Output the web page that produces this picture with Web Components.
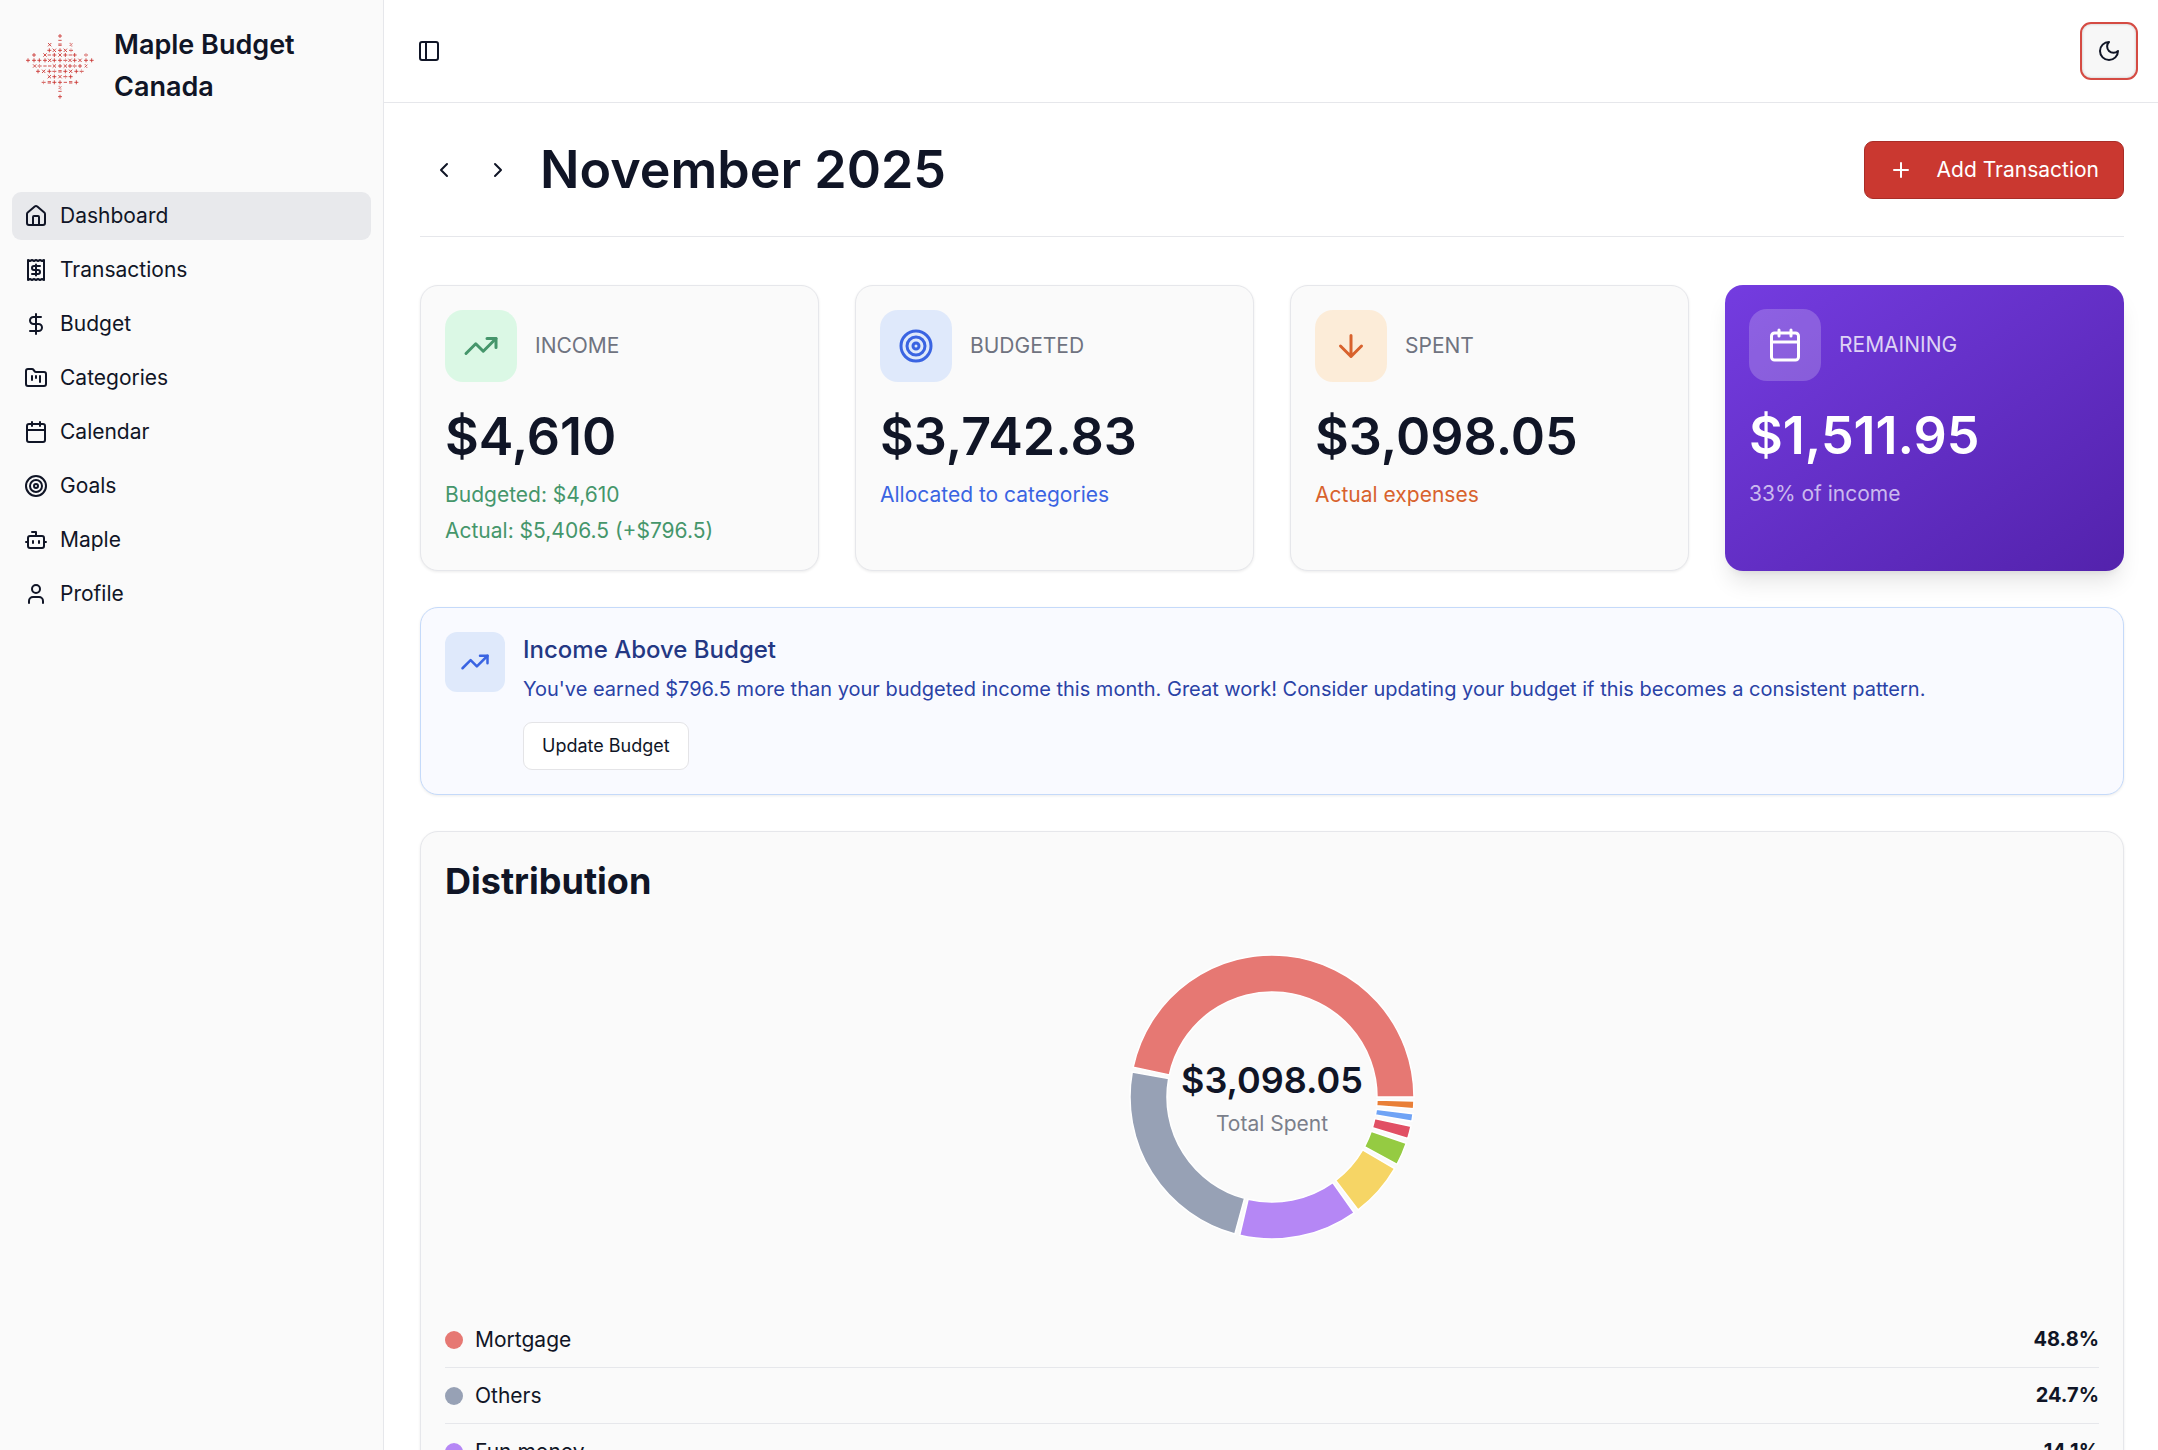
<!DOCTYPE html>
<html lang="en">
<head>
<meta charset="utf-8">
<meta name="viewport" content="width=device-width, initial-scale=1">
<title>Maple Budget Canada</title>
<style>
    :root {
        --ink: #101526;
        --muted: #6f7380;
        --line: #e6e7eb;
        --panel: #fafafa;
        --brand: #ca3830;
    }

    body {
        margin: 0;
        background: #fff;
        color: var(--ink);
        font: 400 21px/30px Inter, "Open Sans", sans-serif;
    }
</style>
</head>
<body>
<budget-app></budget-app>

<script>
const ICONS = {
    house: '<path d="M15 21v-8a1 1 0 0 0-1-1h-4a1 1 0 0 0-1 1v8"/><path d="M3 10a2 2 0 0 1 .709-1.528l7-5.999a2 2 0 0 1 2.582 0l7 5.999A2 2 0 0 1 21 10v9a2 2 0 0 1-2 2H5a2 2 0 0 1-2-2z"/>',
    receipt: '<path d="M4 2v20l2-1 2 1 2-1 2 1 2-1 2 1 2-1 2 1V2l-2 1-2-1-2 1-2-1-2 1-2-1-2 1Z"/><path d="M16 8h-6a2 2 0 1 0 0 4h4a2 2 0 1 1 0 4H8"/><path d="M12 17.5v-11"/>',
    dollar: '<path d="M12 2v20"/><path d="M17 5H9.5a3.5 3.5 0 0 0 0 7h5a3.5 3.5 0 0 1 0 7H6"/>',
    folder: '<path d="M4 20h16a2 2 0 0 0 2-2V8a2 2 0 0 0-2-2h-7.93a2 2 0 0 1-1.66-.9l-.82-1.2A2 2 0 0 0 7.93 3H4a2 2 0 0 0-2 2v13c0 1.1.9 2 2 2Z"/><path d="M8 10v4M12 10v2M16 10v6"/>',
    calendar: '<path d="M8 2v4M16 2v4M3 10h18"/><rect width="18" height="18" x="3" y="4" rx="2"/>',
    target: '<circle cx="12" cy="12" r="10"/><circle cx="12" cy="12" r="6"/><circle cx="12" cy="12" r="2"/>',
    bot: '<path d="M12 8V4H8"/><rect width="16" height="12" x="4" y="8" rx="2"/><path d="M2 14h2M20 14h2M15 13v2M9 13v2"/>',
    user: '<path d="M19 21v-2a4 4 0 0 0-4-4H9a4 4 0 0 0-4 4v2"/><circle cx="12" cy="7" r="4"/>',
    panel: '<rect width="18" height="18" x="3" y="3" rx="2"/><path d="M9 3v18"/>',
    moon: '<path d="M12 3a6 6 0 0 0 9 9 9 9 0 1 1-9-9Z"/>',
    prev: '<path d="m15 18-6-6 6-6"/>',
    next: '<path d="m9 18 6-6-6-6"/>',
    plus: '<path d="M5 12h14M12 5v14"/>',
    trending: '<path d="M22 7l-8.500 8.500-5-5L2 17"/><path d="M16 7h6v6"/>',
    down: '<path d="M12 5v14M19 12l-7 7-7-7"/>'
};

// Icon: <app-icon name="house">, sized with --icon-size
class AppIcon extends HTMLElement {
    connectedCallback() {
        const root = this.attachShadow({ mode: 'open' });
        root.innerHTML = `
            <style>
                :host { display: block; flex: none; width: var(--icon-size, 24px); height: var(--icon-size, 24px); }
                svg { display: block; width: 100%; height: 100%; }
            </style>
            <svg viewBox="0 0 24 24" fill="none" stroke="currentColor" stroke-width="2"
                 stroke-linecap="round" stroke-linejoin="round" aria-hidden="true">${ICONS[this.getAttribute('name')]}</svg>
        `;
    }
}

// Leaf made of small maths signs: [y, 'x + sign ...']
const LEAF = [
    [108, '180+'],
    [121, '180-'],
    [134, '149x 180= 213%'],
    [151, '148+ 163x 180+ 196x 213d'],
    [165, '102+ 135x 148- 163+ 180x 196+ 211- 224+ 258d'],
    [181, '84+ 102+ 118+ 135+ 149x 163+ 180+ 196d 210x 224+ 240x 258+ 275+'],
    [198, '104x 119d 135- 149- 163x 180+ 196x 210+ 224d 240+ 258%'],
    [214, '114+ 131x 148+ 163d 180= 196+ 212x 229+ 245d'],
    [230, '148x 163+ 180x 196d 212+'],
    [247, '131d 148= 163+ 180+ 196- 212= 229+'],
    [263, '180%'],
    [274, '180-'],
    [290, '180+']
];

const SIGNS = {
    '+': 'm-6 0h12m-6-6v12',
    '-': 'm-5 0h10',
    'x': 'm-5-5l10 10m0-10l-10 10',
    '=': 'm-5-2h10m-10 4h10',
    'd': 'm-6 0h12m-7-4h2m-2 8h2',
    '%': 'm-4 4l8-8m-8 0h3m2 8h3'
};

class MapleLogo extends HTMLElement {
    connectedCallback() {
        const root = this.attachShadow({ mode: 'open' });
        let d = '';
        LEAF.forEach(([y, row]) => {
            row.split(' ').forEach((item) => {
                d += `M${parseInt(item, 10)} ${y}${SIGNS[item.slice(-1)]}`;
            });
        });
        root.innerHTML = `
            <style>
                :host { display: block; flex: none; width: 72px; height: 72px; }
                svg { display: block; }
            </style>
            <svg width="72" height="72" viewBox="72 90 216 216" fill="none" stroke="#c92f2b" stroke-width="2.500" aria-hidden="true"><path d="${d}"/></svg>
        `;
    }
}

class NavLink extends HTMLElement {
    connectedCallback() {
        const root = this.attachShadow({ mode: 'open' });
        root.innerHTML = `
            <style>
                :host { display: block; }
                a {
                    display: flex;
                    align-items: center;
                    gap: 12px;
                    height: 48px;
                    padding: 0 12px;
                    border-radius: 9px;
                    color: inherit;
                    text-decoration: none;
                }
                :host([active]) a, a:hover { background: #e8e9ec; }
            </style>
            <a href="#${this.getAttribute('icon')}"><app-icon name="${this.getAttribute('icon')}"></app-icon><slot></slot></a>
        `;
    }
}

class AppSidebar extends HTMLElement {
    connectedCallback() {
        const root = this.attachShadow({ mode: 'open' });
        root.innerHTML = `
            <style>
                :host {
                    display: block;
                    box-sizing: border-box;
                    background: var(--panel);
                    border-right: 1px solid var(--line);
                }
                header {
                    display: flex;
                    align-items: center;
                    gap: 18px;
                    padding: 24px 24px 84px;
                }
                strong { font-size: 27px; line-height: 42px; font-weight: 600; }
                nav {
                    display: flex;
                    flex-direction: column;
                    gap: 6px;
                    padding: 0 12px;
                }
            </style>
            <header><maple-logo></maple-logo><strong>Maple Budget Canada</strong></header>
            <nav>
                <nav-link icon="house" active>Dashboard</nav-link>
                <nav-link icon="receipt">Transactions</nav-link>
                <nav-link icon="dollar">Budget</nav-link>
                <nav-link icon="folder">Categories</nav-link>
                <nav-link icon="calendar">Calendar</nav-link>
                <nav-link icon="target">Goals</nav-link>
                <nav-link icon="bot">Maple</nav-link>
                <nav-link icon="user">Profile</nav-link>
            </nav>
        `;
    }
}

class TopBar extends HTMLElement {
    connectedCallback() {
        const root = this.attachShadow({ mode: 'open' });
        root.innerHTML = `
            <style>
                :host {
                    display: flex;
                    align-items: center;
                    justify-content: space-between;
                    height: 102px;
                    padding: 0 20px 0 24px;
                    border-bottom: 1px solid var(--line);
                }
                button {
                    display: flex;
                    align-items: center;
                    justify-content: center;
                    box-sizing: border-box;
                    padding: 0;
                    border: none;
                    background: none;
                    color: inherit;
                    cursor: pointer;
                }
                .toggle { width: 42px; height: 42px; }
                .theme {
                    width: 58px;
                    height: 58px;
                    border: 2px solid #d54b43;
                    border-radius: 11px;
                    background: #f7f7f7;
                    box-shadow: inset 0 0 2px 1px #dedede;
                }
            </style>
            <button class="toggle" aria-label="Toggle sidebar"><app-icon name="panel"></app-icon></button>
            <button class="theme" aria-label="Toggle theme"><app-icon name="moon"></app-icon></button>
        `;
    }
}

class MonthHeader extends HTMLElement {
    connectedCallback() {
        const root = this.attachShadow({ mode: 'open' });
        root.innerHTML = `
            <style>
                :host {
                    display: flex;
                    align-items: center;
                    justify-content: space-between;
                    min-height: 62px;
                    padding-bottom: 35px;
                    border-bottom: 1px solid var(--line);
                }
                .month { display: flex; align-items: center; gap: 6px; }
                h1 {
                    margin: 0 0 0 12px;
                    font-size: 52px;
                    line-height: 62px;
                    font-weight: 600;
                }
                button {
                    display: flex;
                    align-items: center;
                    border: none;
                    background: none;
                    color: inherit;
                    font: inherit;
                    cursor: pointer;
                }
                .step { width: 48px; height: 48px; padding: 0; justify-content: center; }
                .add {
                    height: 58px;
                    gap: 24px;
                    padding: 0 24px;
                    border: 1px solid #a92d27;
                    border-radius: 9px;
                    background: var(--brand);
                    color: #fff;
                }
            </style>
            <div class="month">
                <button class="step" aria-label="Previous month"><app-icon name="prev"></app-icon></button>
                <button class="step" aria-label="Next month"><app-icon name="next"></app-icon></button>
                <h1><slot></slot></h1>
            </div>
            <button class="add"><app-icon name="plus"></app-icon>Add Transaction</button>
        `;
    }
}

class StatCard extends HTMLElement {
    connectedCallback() {
        const root = this.attachShadow({ mode: 'open' });
        root.innerHTML = `
            <style>
                :host {
                    --tint: #dbf8e5;
                    --accent: #45966b;
                    display: block;
                    box-sizing: border-box;
                    padding: 24px;
                    border-radius: 18px;
                    border: 1px solid var(--line);
                    background: var(--panel);
                    box-shadow: 0 1px 3px rgba(0, 0, 0, 0.08);
                }
                :host([tone="blue"]) { --tint: #dfe9fb; --accent: #3a64e2; }
                :host([tone="orange"]) { --tint: #fcecd8; --accent: #d8622d; }
                :host([tone="purple"]) {
                    --tint: rgba(255, 255, 255, 0.2);
                    --accent: #cbb9ee;
                    border: none;
                    background: linear-gradient(145deg, #743ce0, #5322ac);
                    box-shadow: 0 15px 22px -4px rgba(0, 0, 0, 0.1), 0 6px 9px -6px rgba(0, 0, 0, 0.1);
                    color: #fff;
                }
                .head {
                    display: flex;
                    align-items: center;
                    gap: 18px;
                    margin-bottom: 24px;
                    color: var(--muted);
                }
                :host([tone="purple"]) .head { color: #ded2f5; }
                .tile {
                    display: flex;
                    align-items: center;
                    justify-content: center;
                    width: 72px;
                    height: 72px;
                    border-radius: 18px;
                    background: var(--tint);
                    color: var(--accent);
                    --icon-size: 36px;
                }
                :host([tone="purple"]) .tile { color: #fff; }
                .value { font-size: 52px; line-height: 62px; font-weight: 600; }
                .notes {
                    display: flex;
                    flex-direction: column;
                    gap: 6px;
                    margin-top: 12px;
                    color: var(--accent);
                }
            </style>
            <div class="head">
                <div class="tile"><app-icon name="${this.getAttribute('icon')}"></app-icon></div>
                <span>${this.getAttribute('label')}</span>
            </div>
            <div class="value">${this.getAttribute('value')}</div>
            <div class="notes"><slot></slot></div>
        `;
    }
}

class BudgetAlert extends HTMLElement {
    connectedCallback() {
        const root = this.attachShadow({ mode: 'open' });
        root.innerHTML = `
            <style>
                :host {
                    display: flex;
                    align-items: flex-start;
                    gap: 18px;
                    padding: 24px;
                    border: 1px solid #c5dafa;
                    border-radius: 18px;
                    background: #f9faff;
                    box-shadow: 0 1px 3px rgba(0, 0, 0, 0.08);
                    color: #2a42a6;
                }
                .tile {
                    display: flex;
                    flex: none;
                    align-items: center;
                    justify-content: center;
                    width: 60px;
                    height: 60px;
                    border-radius: 12px;
                    background: #dfe9fb;
                    color: #3a64e2;
                    --icon-size: 30px;
                }
                h2 {
                    margin: 0 0 6px;
                    color: #243884;
                    font-size: 24px;
                    line-height: 36px;
                    font-weight: 500;
                }
                p { margin: 0 0 18px; font-size: 20px; }
                button {
                    height: 48px;
                    padding: 0 18px;
                    border: 1px solid #e4e4e7;
                    border-radius: 9px;
                    background: #fff;
                    color: var(--ink);
                    font: inherit;
                    font-size: 18px;
                    cursor: pointer;
                }
            </style>
            <div class="tile"><app-icon name="trending"></app-icon></div>
            <div>
                <h2>Income Above Budget</h2>
                <p><slot></slot></p>
                <button>Update Budget</button>
            </div>
        `;
    }
}

const SLICES = [
    { name: 'Mortgage', percent: 48.8, color: '#e67873' },
    { name: 'Others', percent: 24.7, color: '#97a1b5' },
    { name: 'Fun money', percent: 14.1, color: '#b587f5' },
    { percent: 6.5, color: '#f6d565' },
    { percent: 2.7, color: '#95cb42' },
    { percent: 1.5, color: '#e14f64' },
    { percent: 0.9, color: '#6fa3f5' },
    { percent: 0.9, color: '#e97f37' }
];

class SpendingDistribution extends HTMLElement {
    connectedCallback() {
        this.attachShadow({ mode: 'open' });
        this.render();
    }

    // Slices run counter-clockwise from three o'clock, 2 degrees apart
    slicePaths() {
        const gap = 2;
        const outer = 142;
        const inner = 105;
        const point = (r, deg) => {
            const a = deg * Math.PI / 180;
            return `${(r * Math.cos(a)).toFixed(2)} ${(-r * Math.sin(a)).toFixed(2)}`;
        };
        let start = 0;
        return SLICES.map((slice) => {
            const end = start + slice.percent / 100 * (360 - gap * SLICES.length);
            const path = `<path fill="${slice.color}" d="M${point(outer, start)}A${outer} ${outer} 0 0 0 ${point(outer, end)}L${point(inner, end)}A${inner} ${inner} 0 0 1 ${point(inner, start)}Z"/>`;
            start = end + gap;
            return path;
        }).join('');
    }

    render() {
        const rows = SLICES.filter((slice) => slice.name).map((slice) => `
            <li>
                <i style="background: ${slice.color}"></i>
                <span>${slice.name}</span>
                <b>${slice.percent}%</b>
            </li>
        `).join('');

        this.shadowRoot.innerHTML = `
            <style>
                :host {
                    display: block;
                    padding: 24px;
                    border: 1px solid var(--line);
                    border-radius: 18px;
                    background: var(--panel);
                    box-shadow: 0 1px 3px rgba(0, 0, 0, 0.08);
                }
                h2 {
                    margin: 0 0 24px;
                    font-size: 36px;
                    line-height: 50px;
                    font-weight: 700;
                }
                .chart {
                    display: grid;
                    place-items: center;
                    height: 334px;
                    margin-bottom: 48px;
                }
                .chart > * { grid-area: 1 / 1; }
                .total { text-align: center; color: #7b7f8b; }
                .total strong {
                    display: block;
                    margin-bottom: 4px;
                    color: var(--ink);
                    font-size: 36px;
                    line-height: 50px;
                    font-weight: 600;
                }
                ul { margin: 0; padding: 0; list-style: none; }
                li {
                    display: flex;
                    align-items: center;
                    gap: 12px;
                    padding: 12px 0;
                    border-bottom: 1px solid var(--line);
                    line-height: 31px;
                }
                i { width: 18px; height: 18px; border-radius: 50%; }
                b { margin-left: auto; font-size: 20px; font-weight: 700; }
            </style>
            <h2>Distribution</h2>
            <div class="chart">
                <svg width="288" height="288" viewBox="-144 -144 288 288" stroke="#fff" stroke-width="1.500" role="img" aria-label="Spending by category">${this.slicePaths()}</svg>
                <div class="total"><strong>$3,098.05</strong>Total Spent</div>
            </div>
            <ul>${rows}</ul>
        `;
    }
}

class BudgetApp extends HTMLElement {
    connectedCallback() {
        const root = this.attachShadow({ mode: 'open' });
        root.innerHTML = `
            <style>
                :host {
                    display: grid;
                    grid-template-columns: 384px minmax(0, 1fr);
                    height: 100vh;
                    overflow: hidden;
                }
                .page {
                    overflow-y: auto;
                    scrollbar-width: none;
                }
                main {
                    display: flex;
                    flex-direction: column;
                    gap: 36px;
                    padding: 36px 34px 36px 36px;
                }
                .stats {
                    display: grid;
                    grid-template-columns: repeat(4, minmax(0, 1fr));
                    gap: 36px;
                    margin-top: 12px;
                }
            </style>
            <app-sidebar></app-sidebar>
            <div class="page">
                <top-bar></top-bar>
                <main>
                    <month-header>November 2025</month-header>
                    <section class="stats">
                        <stat-card icon="trending" label="INCOME" value="$4,610">
                            <span>Budgeted: $4,610</span>
                            <span>Actual: $5,406.5 (+$796.5)</span>
                        </stat-card>
                        <stat-card tone="blue" icon="target" label="BUDGETED" value="$3,742.83"><span>Allocated to categories</span></stat-card>
                        <stat-card tone="orange" icon="down" label="SPENT" value="$3,098.05"><span>Actual expenses</span></stat-card>
                        <stat-card tone="purple" icon="calendar" label="REMAINING" value="$1,511.95"><span>33% of income</span></stat-card>
                    </section>
                    <budget-alert>You've earned $796.5 more than your budgeted income this month. Great work! Consider updating your budget if this becomes a consistent pattern.</budget-alert>
                    <spending-distribution></spending-distribution>
                </main>
            </div>
        `;
    }
}

customElements.define('app-icon', AppIcon);
customElements.define('maple-logo', MapleLogo);
customElements.define('nav-link', NavLink);
customElements.define('app-sidebar', AppSidebar);
customElements.define('top-bar', TopBar);
customElements.define('month-header', MonthHeader);
customElements.define('stat-card', StatCard);
customElements.define('budget-alert', BudgetAlert);
customElements.define('spending-distribution', SpendingDistribution);
customElements.define('budget-app', BudgetApp);
</script>
</body>
</html>
